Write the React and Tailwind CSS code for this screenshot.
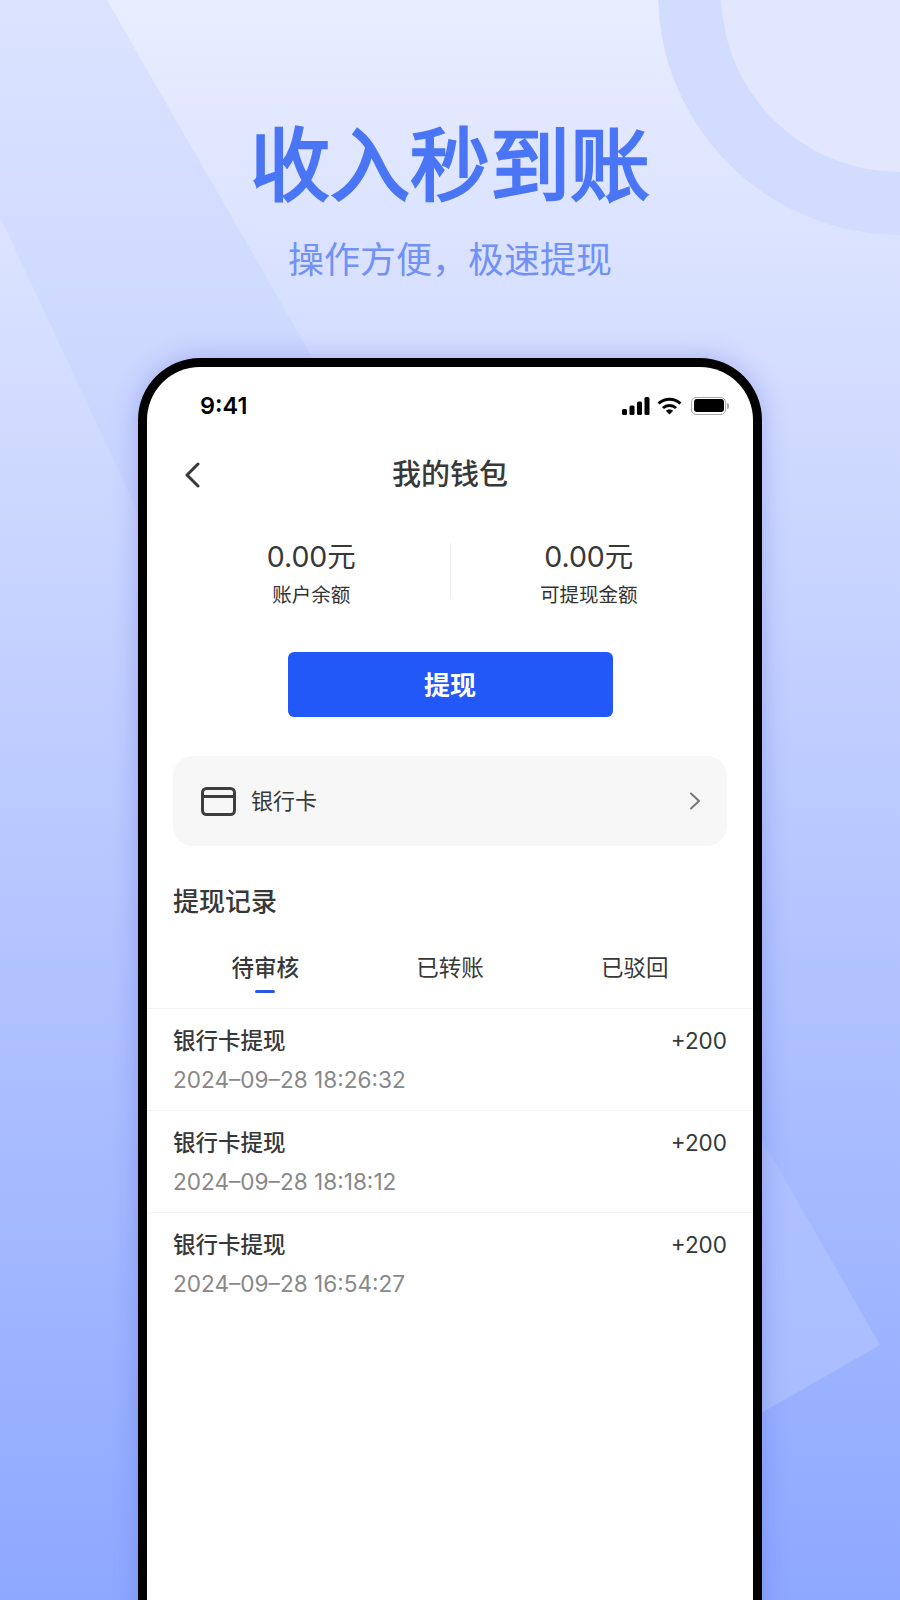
import React from 'react';

const records = [
  { title: '银行卡提现', time: '2024–09–28 18:26:32', amount: '+200' },
  { title: '银行卡提现', time: '2024–09–28 18:18:12', amount: '+200' },
  { title: '银行卡提现', time: '2024–09–28 16:54:27', amount: '+200' },
];

const tabs = ['待审核', '已转账', '已驳回'];

const fontStack = "font-['Inter','Noto_Sans_CJK_SC',sans-serif]";

function BackgroundArt() {
  return (
    <svg className="absolute inset-0" width="900" height="1600" viewBox="0 0 900 1600">
      <defs>
        <linearGradient id="band" x1="0" y1="0" x2="0" y2="1">
          <stop offset="0" stopColor="#dbe3ff" />
          <stop offset="0.3" stopColor="#c9d5ff" />
          <stop offset="0.7" stopColor="#b0c2ff" />
          <stop offset="1" stopColor="#a8bcff" />
        </linearGradient>
      </defs>
      <polygon points="107,0 880,1345 763,1412 600,1500 0,217 0,0" fill="url(#band)" />
      <circle cx="900" cy="-7" r="242" fill="#d2dcfe" />
      <circle cx="900" cy="-7" r="179" fill="#e2e7fe" />
    </svg>
  );
}

function StatusIcons() {
  return (
    <div className="flex items-center gap-[7px]">
      <svg width="28" height="18" viewBox="0 0 28 18" fill="#000">
        <rect x="0" y="12" width="5" height="6" rx="1.5" />
        <rect x="7.5" y="8.5" width="5" height="9.5" rx="1.5" />
        <rect x="15" y="4.5" width="5" height="13.5" rx="1.5" />
        <rect x="22.5" y="0" width="5" height="18" rx="1.5" />
      </svg>
      <svg width="25" height="18" viewBox="0 0 25 18" fill="none" stroke="#000" strokeWidth="3">
        <path d="M1.5 6.5C7.5 .8 17.500 .8 23.500 6.500" />
        <path d="M6 11C9.500 7.800 15.500 7.800 19 11" />
        <path d="M12.500 17.500L8.800 13.700C10.800 12 14.200 12 16.200 13.700Z" fill="#000" stroke="none" />
      </svg>
      <div className="flex items-center ml-[2px]">
        <div className="w-[35px] h-[18px] rounded-[5px] border-[1.5px] border-[#a8a8a8] p-[1.500px]">
          <div className="w-full h-full rounded-[3px] bg-black" />
        </div>
        <div className="w-[2px] h-[6px] ml-[1px] rounded-r-full bg-[#a8a8a8]" />
      </div>
    </div>
  );
}

export default function App() {
  return (
    <div className={`relative w-[900px] h-[1600px] overflow-hidden bg-gradient-to-b from-[#e9edff] via-[#bbcaff] to-[#8ea8ff] ${fontStack}`}>
      <BackgroundArt />

      <div className="relative flex flex-col items-center pt-[125px]">
        <h1 className="text-[80px] leading-none font-normal text-[#4a76f5] [-webkit-text-stroke:2.500px_#4a76f5]">收入秒到账</h1>
        <p className="mt-[37px] text-[36px] leading-none text-[#7191f6]">操作方便，极速提现</p>

        <div className="mt-[80px] w-[624px] h-[1300px] bg-white border-[9px] border-b-0 border-black rounded-t-[62px] shadow-[0_0_26px_rgba(70,80,200,0.3)]">
          <div className="h-[77px] flex items-center justify-between pl-[53px] pr-[24px]">
            <span className="text-[23.500px] leading-none font-semibold text-black">9:41</span>
            <StatusIcons />
          </div>

          <div className="relative h-[62px] flex items-center justify-center">
            <svg className="absolute left-[36px] top-[18px]" width="18" height="26" viewBox="0 0 18 26" fill="none" stroke="#383838" strokeWidth="3" strokeLinecap="round" strokeLinejoin="round">
              <path d="M15 2L4 13L15 24" />
            </svg>
            <span className="text-[29px] font-medium text-[#383838]">我的钱包</span>
          </div>

          <div className="mt-[32px] px-[26px] flex items-center">
            <div className="flex-1 flex flex-col items-center">
              <span className="text-[28.500px] leading-[38px] text-[#383838]">0.00元</span>
              <span className="mt-[6px] text-[19.500px] leading-[26px] text-[#333]">账户余额</span>
            </div>
            <div className="self-start mt-[5px] w-px h-[55px] bg-[#f0f0f0]" />
            <div className="flex-1 flex flex-col items-center">
              <span className="text-[28.500px] leading-[38px] text-[#383838]">0.00元</span>
              <span className="mt-[6px] text-[19.500px] leading-[26px] text-[#333]">可提现金额</span>
            </div>
          </div>

          <div className="mt-[44px] mx-auto w-[325px] h-[65px] pt-[2px] rounded-[6px] bg-[#2257f8] flex items-center justify-center text-[26px] font-bold text-white">
            提现
          </div>

          <div className="mt-[39px] mx-[26px] h-[90px] rounded-[20px] bg-[#f7f7f7] flex items-center pl-[28px] pr-[26px]">
            <svg width="35" height="29" viewBox="0 0 35 29" fill="none" stroke="#3d3d3d" strokeWidth="3">
              <rect x="1.500" y="1.500" width="32" height="26" rx="4" />
              <path d="M1.500 9.500H33.500" />
            </svg>
            <span className="ml-[15px] text-[22px] text-[#383838]">银行卡</span>
            <svg className="ml-auto" width="12" height="18" viewBox="0 0 12 18" fill="none" stroke="#777" strokeWidth="2" strokeLinecap="round" strokeLinejoin="round">
              <path d="M2 1.500L10 9L2 16.500" />
            </svg>
          </div>

          <h2 className="mt-[38px] px-[26px] text-[26px] leading-[36px] font-medium text-[#383838]">提现记录</h2>

          <div className="flex pt-[32px] px-[26px] pb-[15px] border-b border-[#f3f3f3]">
            {tabs.map((tab, i) => (
              <div key={tab} className="flex-1 flex flex-col items-center">
                <span className={`text-[22.500px] leading-[32px] text-[#383838] ${i === 0 ? 'font-medium' : ''}`}>{tab}</span>
                <div className={`mt-[6px] w-[20px] h-[3px] rounded-full ${i === 0 ? 'bg-[#2a57e8]' : ''}`} />
              </div>
            ))}
          </div>

          {records.map((rec) => (
            <div key={rec.time} className="h-[102px] px-[26px] pt-[16px] border-b border-[#f3f3f3] last:border-b-0">
              <div className="flex justify-between">
                <span className="text-[22.500px] leading-[32px] font-medium text-[#383838]">{rec.title}</span>
                <span className="text-[22.500px] leading-[32px] text-[#383838]">{rec.amount}</span>
              </div>
              <div className="mt-[8px] text-[22.600px] leading-[30px] text-[#888]">{rec.time}</div>
            </div>
          ))}
        </div>
      </div>
    </div>
  );
}
